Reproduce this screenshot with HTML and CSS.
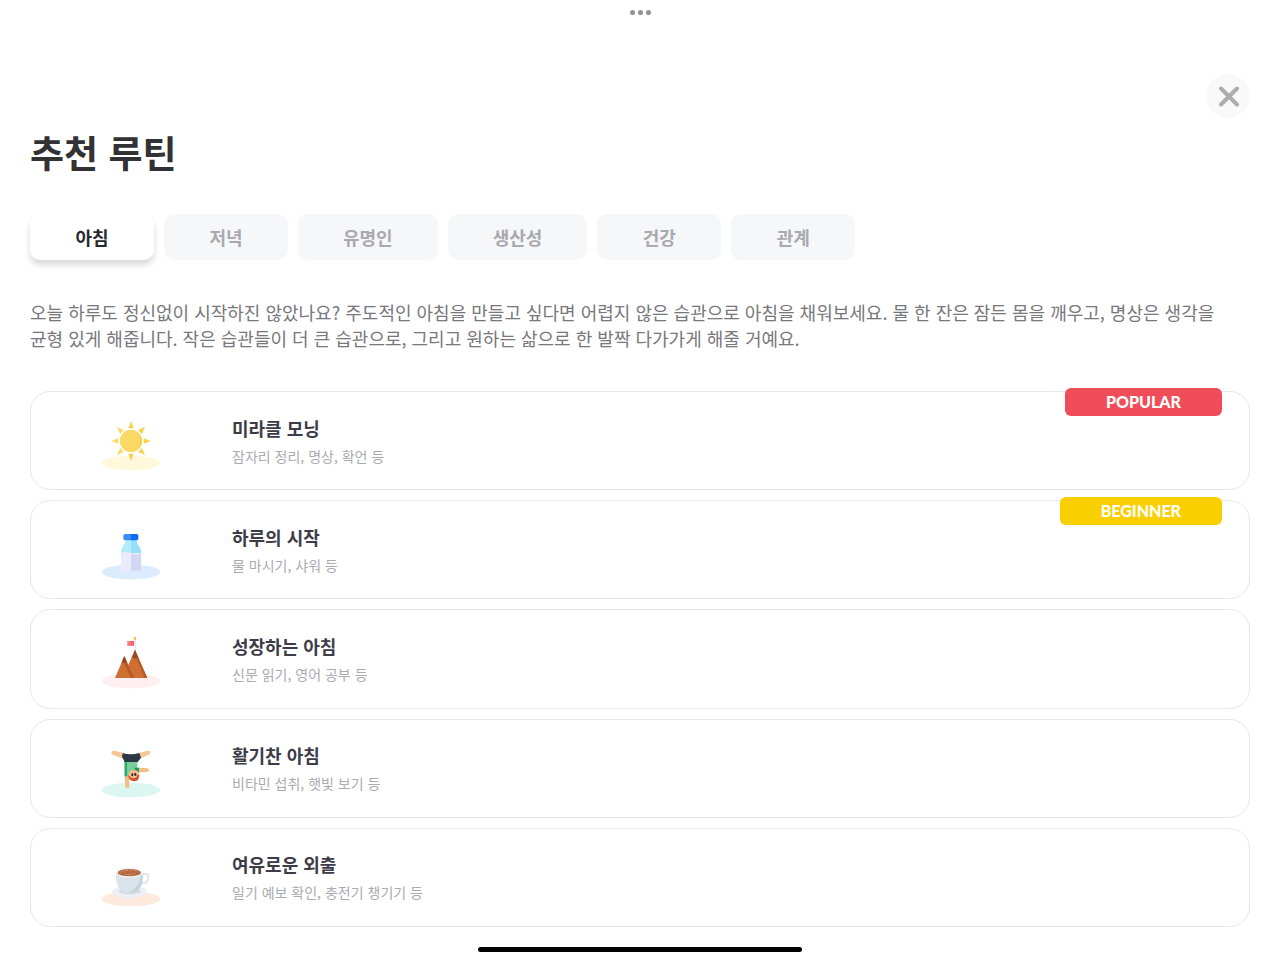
FILE: index.html
```html
<!DOCTYPE html>
<html lang="ko">
<head>
<meta charset="utf-8">
<meta name="viewport" content="width=device-width, initial-scale=1">
<title>추천 루틴</title>
<link rel="stylesheet" href="styles.css">
</head>
<body>
<div class="page">
  <div class="grabber"><span class="dot"></span><span class="dot"></span><span class="dot"></span></div>
  <header class="header">
    <button class="close" type="button" aria-label="닫기">
      <svg width="22" height="22" viewBox="0 0 22 22" aria-hidden="true"><path d="M4 3.500L20 19.500M20 3.500L4 19.500" fill="none" stroke="#acacb1" stroke-width="4" stroke-linecap="round"/></svg>
    </button>
    <h1 class="title">추천 루틴</h1>
  </header>
  <nav class="tabs" role="tablist">
    <button class="tab tab-active" type="button" role="tab" aria-selected="true">아침</button>
    <button class="tab" type="button" role="tab" aria-selected="false">저녁</button>
    <button class="tab" type="button" role="tab" aria-selected="false">유명인</button>
    <button class="tab" type="button" role="tab" aria-selected="false">생산성</button>
    <button class="tab" type="button" role="tab" aria-selected="false">건강</button>
    <button class="tab" type="button" role="tab" aria-selected="false">관계</button>
  </nav>
  <p class="intro">오늘 하루도 정신없이 시작하진 않았나요? 주도적인 아침을 만들고 싶다면 어렵지 않은 습관으로 아침을 채워보세요. 물 한 잔은 잠든 몸을 깨우고, 명상은 생각을 균형 있게 해줍니다. 작은 습관들이 더 큰 습관으로, 그리고 원하는 삶으로 한 발짝 다가가게 해줄 거예요.</p>
  <ul class="routines">
    <li class="card">
      <div class="art">
        <svg class="icon" viewBox="0 0 240 210" aria-hidden="true">
          <ellipse cx="123" cy="159" rx="88" ry="22" fill="#fff8db"/>
          <g fill="#f8d34a">
            <path d="M123 33L131 55H115Z"/>
            <path d="M123 33L131 55H115Z" transform="rotate(45 123 93)"/>
            <path d="M123 33L131 55H115Z" transform="rotate(90 123 93)"/>
            <path d="M123 33L131 55H115Z" transform="rotate(135 123 93)"/>
            <path d="M123 33L131 55H115Z" transform="rotate(180 123 93)"/>
          </g>
          <g fill="#fadb6d">
            <path d="M123 33L131 55H115Z" transform="rotate(225 123 93)"/>
            <path d="M123 33L131 55H115Z" transform="rotate(270 123 93)"/>
            <path d="M123 33L131 55H115Z" transform="rotate(315 123 93)"/>
          </g>
          <circle cx="123" cy="93" r="33" fill="#f5cf35"/>
          <path d="M132 61A33 33 0 1 0 132 125Q151 115 151 93T132 61Z" fill="#fbd964"/>
        </svg>
      </div>
      <div class="text"><h2 class="name">미라클 모닝</h2><p class="detail">잠자리 정리, 명상, 확언 등</p></div>
      <span class="badge badge-popular">POPULAR</span>
    </li>
    <li class="card">
      <div class="art">
        <svg class="icon" viewBox="0 0 240 210" aria-hidden="true">
          <ellipse cx="123" cy="159" rx="88" ry="22" fill="#dcebfd"/>
          <path d="M106 62H123V102H93V96Q94 83 102 77Q106 72 106 62Z" fill="#b3ebfa"/>
          <path d="M123 62H140Q140 72 144 77Q152 83 153 96V103H123Z" fill="#95e0f8"/>
          <path d="M93 102Q108 96 123 103V155H98Q93 155 93 150Z" fill="#ebebfa"/>
          <path d="M123 103Q138 108 153 103V150Q153 155 148 155H123Z" fill="#d3d6f4"/>
          <path d="M123 45H105Q100 45 100 50V58Q100 64 106 64H123Z" fill="#3d8bf7"/>
          <path d="M123 45H140Q145 45 145 50V58Q145 64 139 64H123Z" fill="#0b6cf4"/>
        </svg>
      </div>
      <div class="text"><h2 class="name">하루의 시작</h2><p class="detail">물 마시기, 샤워 등</p></div>
      <span class="badge badge-beginner">BEGINNER</span>
    </li>
    <li class="card">
      <div class="art">
        <svg class="icon" viewBox="0 0 240 210" aria-hidden="true">
          <ellipse cx="123" cy="159" rx="88" ry="22" fill="#feeff0"/>
          <path d="M132 35H138V68H132Z" fill="#e5e9f2"/>
          <rect x="131" y="27" width="7" height="9" rx="2" fill="#f8c34a"/>
          <path d="M112 39H132V53H112L115 46Z" fill="#f3616b"/>
          <path d="M112 39H123V53H112Z" fill="#fa7b80"/>
          <path d="M135 66L172 150H97Z" fill="#cf7032"/>
          <path d="M135 66L172 150H164L132 77Z" fill="#b65d2a"/>
          <path d="M135 66L147 93L140 88L134 94L129 87L124 91Z" fill="#934a25"/>
          <path d="M103 85L132 150H75Z" fill="#cf7032"/>
          <path d="M103 85L132 150H123L98 96Z" fill="#b35a29"/>
          <path d="M103 85L112 105L106 101L101 106L94 104Z" fill="#934a25"/>
        </svg>
      </div>
      <div class="text"><h2 class="name">성장하는 아침</h2><p class="detail">신문 읽기, 영어 공부 등</p></div>
    </li>
    <li class="card">
      <div class="art">
        <svg class="icon" viewBox="0 0 240 210" aria-hidden="true">
          <ellipse cx="123" cy="159" rx="88" ry="22" fill="#dcf7f2"/>
          <path d="M106 49L76 42Q64 40 64 48Q65 54 76 56L104 67Z" fill="#f3c797"/>
          <path d="M142 49L170 42Q181 40 181 48Q179 54 169 56L146 67Z" fill="#f3c797"/>
          <path d="M104 114H118V144Q119 154 111 154Q105 153 105 144Z" fill="#f3bd8b"/>
          <path d="M104 70H142V118H104Z" fill="#78cf9e"/>
          <path d="M104 70H111V118H104Z" fill="#2aa866"/>
          <path d="M134 92H148V106H134Z" fill="#219d59"/>
          <path d="M147 93H170Q177 94 177 100Q176 106 168 106H147Z" fill="#f1bd8b"/>
          <path d="M98 49Q123 55 148 48L153 62L143 75H104L96 59Z" fill="#2c3844"/>
          <circle cx="131" cy="115" r="17" fill="#f4bc8c"/>
          <path d="M114 114Q120 119 130 117T148 113Q148 132 132 133Q116 132 114 114Z" fill="#cf5b2c"/>
          <path d="M120 117Q121 123 130 123T142 117" fill="#fac79a"/>
          <g fill="#282c33"><ellipse cx="127" cy="113" rx="3" ry="5"/><ellipse cx="136" cy="112" rx="3" ry="5"/></g>
        </svg>
      </div>
      <div class="text"><h2 class="name">활기찬 아침</h2><p class="detail">비타민 섭취, 햇빛 보기 등</p></div>
    </li>
    <li class="card">
      <div class="art">
        <svg class="icon" viewBox="0 0 240 210" aria-hidden="true">
          <ellipse cx="123" cy="159" rx="88" ry="22" fill="#ffe9dc"/>
          <ellipse cx="119" cy="137" rx="53" ry="18" fill="#edf1f5"/>
          <ellipse cx="119" cy="136" rx="34" ry="9" fill="#d3dce4"/>
          <path d="M150 84H170Q176 84 175 91L172 105Q170 112 160 112H148" fill="none" stroke="#dfe6ec" stroke-width="6"/>
          <path d="M78 80H158V94C158 122 142 140 118 140S78 122 78 94Z" fill="#dce4eb"/>
          <path d="M152 88Q152 121 116 140Q158 141 158 94V80Z" fill="#c7d3dd"/>
          <ellipse cx="118" cy="81" rx="40" ry="15" fill="#edf2f6"/>
          <ellipse cx="118" cy="80" rx="35" ry="11" fill="#b66a43"/>
          <path d="M92 80Q106 70 118 75Q132 67 145 78M105 83Q118 91 135 81" stroke="#d9a17d" stroke-width="3" fill="none" stroke-dasharray="5 4"/>
        </svg>
      </div>
      <div class="text"><h2 class="name">여유로운 외출</h2><p class="detail">일기 예보 확인, 충전기 챙기기 등</p></div>
    </li>
  </ul>
  <div class="home-bar"></div>
</div>
</body>
</html>
```
FILE: styles.css
```css
* { box-sizing: border-box; }
body {
  margin: 0;
  background: #fff;
  color: #323234;
  font-family: "Noto Sans CJK KR", sans-serif;
  word-break: keep-all;
}
h1, h2, p, ul { margin: 0; padding: 0; }
button { border: 0; padding: 0; font: inherit; cursor: pointer; }
.page {
  display: flex;
  flex-direction: column;
  min-height: 100vh;
  padding: 0 30px 8px;
}
.grabber {
  display: flex;
  justify-content: center;
  gap: 3px;
  height: 24px;
  align-items: center;
}
.dot { width: 5px; height: 5px; border-radius: 50%; background: #929292; }
.header { display: flex; flex-direction: column; padding-top: 50px; }
.close {
  display: flex;
  align-items: center;
  justify-content: center;
  align-self: flex-end;
  width: 44px;
  height: 44px;
  border-radius: 50%;
  background: #f9f9f9;
}
.title {
  margin-top: 6px;
  font-size: 37px;
  line-height: 56px;
  font-weight: 700;
}
.tabs { display: flex; flex-wrap: wrap; gap: 10px; margin-top: 34px; }
.tab {
  min-width: 124px;
  height: 46px;
  padding: 0 45px;
  border-radius: 10px;
  background: #f6f7f9;
  color: #a9a9b0;
  font-size: 18px;
  font-weight: 700;
}
.tab-active {
  background: #fff;
  color: #28282c;
  box-shadow: 0 5px 6px rgba(0, 0, 0, 0.15);
}
.intro {
  margin-top: 39px;
  color: #77777c;
  font-size: 18px;
  line-height: 26px;
}
.routines {
  display: flex;
  flex: 1;
  flex-direction: column;
  gap: 10px;
  margin-top: 40px;
  list-style: none;
}
.card {
  position: relative;
  display: flex;
  flex: 1;
  align-items: center;
  border: 1px solid #e8e8ea;
  border-radius: 20px;
}
.art { display: flex; flex: 0 0 201px; justify-content: center; padding: 8px 4px 0 0; }
.icon { width: 80px; height: 70px; }
.text { padding-top: 2px; }
.name { color: #3c3c48; font-size: 18px; line-height: 28px; font-weight: 700; }
.detail { color: #aaaab1; font-size: 14px; line-height: 28px; }
.badge {
  position: absolute;
  top: -4px;
  right: 27px;
  padding: 0 41px;
  border-radius: 6px;
  color: #fff;
  font-family: Lato, sans-serif;
  font-size: 16px;
  line-height: 28px;
  font-weight: 900;
}
.badge-popular { background: #ef4d59; }
.badge-beginner { background: #f9cf00; }
.home-bar {
  align-self: center;
  width: 324px;
  height: 5px;
  margin-top: 20px;
  border-radius: 3px;
  background: #000;
}
```
